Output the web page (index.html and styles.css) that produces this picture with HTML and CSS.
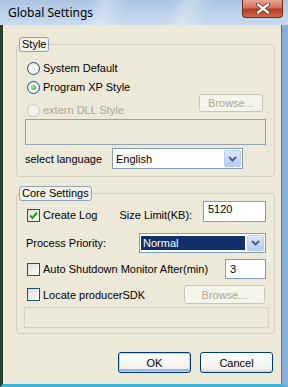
FILE: index.html
```html
<!DOCTYPE html>
<html lang="en">
<head>
  <meta charset="UTF-8">
  <title>Global Settings</title>
  <link rel="stylesheet" href="styles.css">
</head>
<body>
  <div class="window">
    <div class="titlebar">
      <span class="title">Global Settings</span>
      <span class="close">
        <svg width="14" height="11" viewBox="0 0 14 11">
          <path d="M2 1.5 L12 9.5 M12 1.5 L2 9.5" stroke="#6b2418" stroke-width="4" stroke-linecap="round"/>
          <path d="M2 1.5 L12 9.5 M12 1.5 L2 9.5" stroke="#fff" stroke-width="2.4" stroke-linecap="round"/>
        </svg>
      </span>
    </div>

    <div class="client">
      <fieldset class="group style-group">
        <legend>Style</legend>
        <label class="opt row1"><span class="radio"></span>System Default</label>
        <label class="opt row2"><span class="radio checked"></span>Program XP Style</label>
        <div class="dll-row">
          <label class="opt disabled"><span class="radio"></span>extern DLL Style</label>
          <span class="btn off browse1">Browse...</span>
        </div>
        <div class="field off wide"></div>
        <div class="lang-row">
          <span>select language</span>
          <div class="select lang">
            <span class="value">English</span>
            <span class="arrow"><svg width="9" height="6" viewBox="0 0 9 6"><path d="M1 1 L4.5 4.5 L8 1" fill="none" stroke="#4d6185" stroke-width="2"/></svg></span>
          </div>
        </div>
      </fieldset>

      <fieldset class="group core-group">
        <legend>Core Settings</legend>
        <div class="log-row">
          <label class="opt"><span class="check on"><svg width="11" height="11" viewBox="0 0 11 11"><path d="M2 5.5 L4.5 8 L9 2.5" fill="none" stroke="#21a121" stroke-width="2"/></svg></span>Create Log</label>
          <span class="size-label">Size Limit(KB):</span>
          <div class="field size">5120</div>
        </div>
        <div class="prio-row">
          <span>Process Priority:</span>
          <div class="select prio">
            <span class="value picked">Normal</span>
            <span class="arrow"><svg width="9" height="6" viewBox="0 0 9 6"><path d="M1 1 L4.5 4.5 L8 1" fill="none" stroke="#4d6185" stroke-width="2"/></svg></span>
          </div>
        </div>
        <div class="shut-row">
          <label class="opt"><span class="check"></span>Auto Shutdown Monitor After(min)</label>
          <div class="field mins">3</div>
        </div>
        <div class="sdk-row">
          <label class="opt"><span class="check"></span>Locate producerSDK</label>
          <span class="btn off browse2">Browse...</span>
        </div>
        <div class="field off sdk-path"></div>
      </fieldset>

      <div class="actions">
        <span class="btn default">OK</span>
        <span class="btn">Cancel</span>
      </div>
    </div>
  </div>
</body>
</html>
```

FILE: styles.css
```css
html, body {
  margin: 0;
  padding: 0;
  background: #2d4030;
  font-family: "Liberation Sans", Arial, sans-serif;
  font-size: 11px;
  color: #000;
}

.window {
  width: 288px;
  height: 387px;
  display: flex;
  flex-direction: column;
}

.titlebar {
  height: 25px;
  flex: none;
  display: flex;
  justify-content: space-between;
  align-items: flex-start;
  background:
    linear-gradient(110deg, rgba(255,255,255,0) 0 30%, rgba(255,255,255,.28) 36%, rgba(255,255,255,0) 44%,
      rgba(255,255,255,0) 58%, rgba(255,255,255,.3) 64%, rgba(255,255,255,0) 72%),
    linear-gradient(#aac5e2, #c8dbef);
}

.title {
  font-family: "Noto Sans", "Liberation Sans", sans-serif;
  font-size: 12px;
  line-height: 14px;
  margin: 6px 0 0 8px;
}

.close {
  width: 41px;
  height: 18px;
  margin-right: 5px;
  box-sizing: border-box;
  border: 1px solid #6e2b20;
  border-top: 0;
  border-radius: 0 0 4px 4px;
  background: linear-gradient(#e5a695, #d0705a 45%, #b83b25 55%, #cf6a4c);
  display: flex;
  align-items: center;
  justify-content: center;
}

.client {
  flex: 1;
  background: #ece9d8;
  border-left: 3px solid #2d4030;
  border-right: 6px solid #86aed6;
  border-bottom: 3px solid #39b5dc;
  box-shadow: inset -1px 0 #54708f;
  padding: 12px 7px 0 13px;
  display: flex;
  flex-direction: column;
}

.group {
  margin: 0;
  min-width: 0;
  border: 1px solid #d0d0bf;
  border-radius: 4px;
  padding: 8px 8px 5px 8px;
  display: flex;
  flex-direction: column;
}

.style-group {
  padding-bottom: 7px;
}

.group legend {
  margin-left: -6px;
  padding: 0 2px;
  height: 15px;
  box-sizing: border-box;
  line-height: 13px;
  font-size: 11px;
  border: 1px solid #8fa4bc;
  border-radius: 3px;
  background: #f3f2ea;
}

.core-group {
  margin-top: 9px;
  padding-top: 0;
}

.opt {
  display: flex;
  align-items: center;
  gap: 3px;
  padding-left: 2px;
}

.opt.disabled {
  color: #aca899;
}

.row1 { height: 16px; }
.row2 { height: 14px; margin-top: 4px; }

.radio {
  width: 13px;
  height: 13px;
  box-sizing: border-box;
  border-radius: 50%;
  border: 1px solid #1c5180;
  background: radial-gradient(circle at 60% 60%, #fff 20%, #dcdcd4);
  display: flex;
  align-items: center;
  justify-content: center;
}

.radio.checked::after {
  content: "";
  width: 5px;
  height: 5px;
  border-radius: 50%;
  background: radial-gradient(circle at 35% 35%, #9ef09e, #21a121);
}

.disabled .radio {
  border-color: #cac8bb;
  background: #f4f3ee;
}

.check {
  width: 13px;
  height: 13px;
  box-sizing: border-box;
  border: 1px solid #1c5180;
  background: linear-gradient(135deg, #dcdcd7, #fff);
  display: flex;
  align-items: center;
  justify-content: center;
}

.dll-row {
  height: 24px;
  display: flex;
  justify-content: space-between;
}

.dll-row .opt {
  align-self: flex-end;
  height: 16px;
}

.btn {
  width: 73px;
  height: 21px;
  box-sizing: border-box;
  border: 1px solid #003c74;
  border-radius: 3px;
  background: linear-gradient(#fff, #f3f2ec 80%, #d8d3c8);
  display: flex;
  align-items: center;
  justify-content: center;
}

.btn.off {
  border-color: #c9c7ba;
  background: #f5f4ea;
  color: #aca899;
}

.browse1 {
  width: 64px;
  height: 18px;
  margin-right: 3px;
}

.browse2 {
  width: 81px;
  height: 19px;
}

.field {
  box-sizing: border-box;
  border: 1px solid #7f9db9;
  background: #fff;
  padding: 0 4px;
}

.field.off {
  background: #ece9d8;
}

.wide {
  height: 26px;
  margin-top: 1px;
  border-color: #94a3b5;
}

.lang-row {
  margin-top: 3px;
  display: flex;
  align-items: center;
  justify-content: space-between;
  padding-right: 23px;
}

.select {
  height: 21px;
  box-sizing: border-box;
  border: 1px solid #7f9db9;
  background: #fff;
  display: flex;
  align-items: stretch;
}

.select .value {
  flex: 1;
  display: flex;
  align-items: center;
  padding-left: 3px;
}

.select .value.picked {
  margin: 2px 1px 2px 1px;
  padding-left: 2px;
  background: #11306a;
  color: #fff;
}

.select .arrow {
  width: 17px;
  margin: 1px;
  border: 1px solid #b9ccf3;
  border-radius: 2px;
  box-sizing: border-box;
  background: linear-gradient(#dde7fc, #b7cbf5);
  display: flex;
  align-items: center;
  justify-content: center;
}

.lang {
  width: 131px;
}

.log-row {
  height: 28px;
  display: flex;
  align-items: center;
}

.size-label {
  margin-left: 22px;
}

.field.size {
  margin-left: auto;
  align-self: flex-start;
  width: 63px;
  height: 21px;
  line-height: 15px;
}

.prio-row {
  margin-top: 4px;
  padding-left: 1px;
  display: flex;
  align-items: center;
  justify-content: space-between;
}

.prio {
  width: 127px;
  height: 20px;
}

.shut-row {
  margin-top: 6px;
  height: 20px;
  display: flex;
  align-items: center;
  justify-content: space-between;
}

.field.mins {
  width: 41px;
  height: 20px;
  line-height: 18px;
}

.sdk-row {
  margin-top: 6px;
  height: 19px;
  display: flex;
  align-items: center;
  justify-content: space-between;
  padding-right: 1px;
}

.sdk-path {
  margin: 3px -3px 0 -1px;
  height: 21px;
  border-color: #d5d2c6;
}

.actions {
  margin-top: 18px;
  display: flex;
  justify-content: flex-end;
  gap: 9px;
  padding-right: 2px;
}

.btn.default {
  box-shadow: inset 0 0 0 1px #bcd1f2, inset 0 -2px 0 1px #97b6ea;
}
```
